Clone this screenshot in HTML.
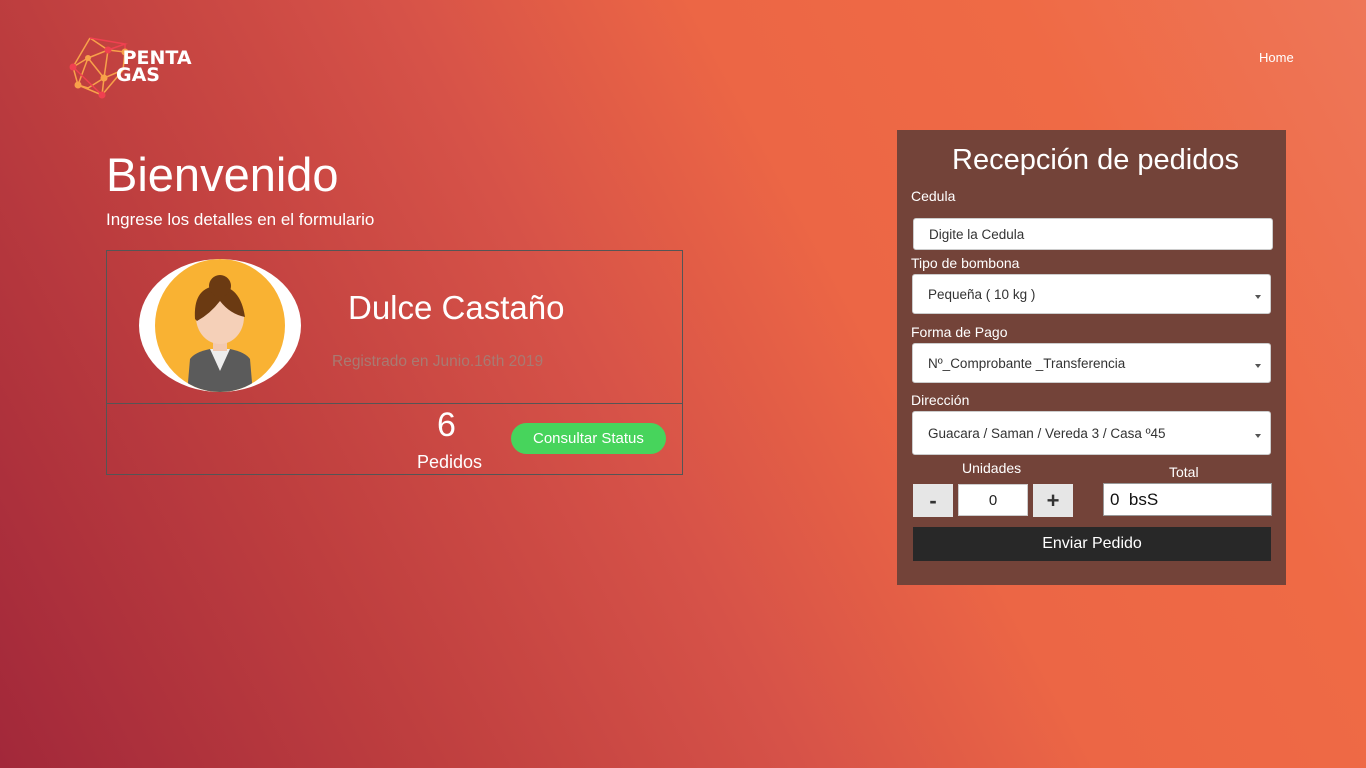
<!DOCTYPE html>
<html><head><meta charset="utf-8"><style>
*{box-sizing:border-box;margin:0;padding:0}
body{width:1366px;height:768px;overflow:hidden;font-family:"Liberation Sans",sans-serif;color:#fff;
background:linear-gradient(62deg,#a2283a 0%,#bf3f3f 25%,#d65248 45%,#ec6645 62%,#ef6a45 80%,#ee7658 100%);position:relative}
.abs{position:absolute}
.lbl{position:absolute;left:911px;font-size:14px;color:#fff}
.fld{position:absolute;left:912px;width:359px;background:#fff;border-radius:3px;color:#333;font-size:13.5px;padding-left:15px;display:flex;align-items:center;border:1px solid #ccc}
.fld .ar{position:absolute;right:9px;top:50%;margin-top:1px;border-left:3.5px solid transparent;border-right:3.5px solid transparent;border-top:4px solid #555}
</style></head><body>
<svg class="abs" style="left:68px;top:30px" width="70" height="70" viewBox="0 0 70 70">
<g stroke="#f8a14a" stroke-width="1.5" fill="none">
<path d="M10 55 L20 28 L40 20 L57 22 L55 40 L36 48 L20 58 L10 55 M20 28 L36 48 L40 20 M5 37 L20 28 M5 37 L10 55 M36 48 L34 65 L10 55 M22 8 L40 20 M22 8 L5 37 M55 40 L34 65"/>
</g>
<g stroke="#f04050" stroke-width="1.5" fill="none"><path d="M22 8 L57 14 L40 20 M5 37 L34 65 M57 14 L57 22"/></g>
<g fill="#f8a14a"><circle cx="10" cy="55" r="3.5"/><circle cx="36" cy="48" r="3.5"/><circle cx="57" cy="22" r="3.5"/><circle cx="20" cy="28" r="3"/></g>
<g fill="#f04050"><circle cx="40" cy="20" r="3.5"/><circle cx="5" cy="37" r="3.5"/><circle cx="34" cy="65" r="3.5"/></g>
</svg>
<div class="abs" style="left:116px;top:50px;font:900 19px/17px 'DejaVu Sans',sans-serif">&nbsp;PENTA<br>GAS</div>
<div class="abs" style="left:1259px;top:50px;font-size:13px">Home</div>

<div class="abs" style="left:106px;top:147px;font-size:47px">Bienvenido</div>
<div class="abs" style="left:106px;top:210px;font-size:17px">Ingrese los detalles en el formulario</div>

<div class="abs" style="left:106px;top:250px;width:577px;height:225px;border:1px solid #555"></div>
<div class="abs" style="left:106px;top:403px;width:577px;border-top:1px solid #555"></div>
<div class="abs" style="left:139px;top:259px;width:162px;height:133px;border-radius:50%;background:#fff;overflow:hidden">
<div class="abs" style="left:16px;top:0;width:130px;height:133px;border-radius:50%;background:#f9b233;overflow:hidden">
<svg width="130" height="133" viewBox="0 0 130 133">
<path d="M32 135 L35 100 Q40 93 55 90 L75 90 Q90 93 95 100 L98 135Z" fill="#5b5b5b"/>
<path d="M55 90 L65 112 L75 90Z" fill="#eee"/>
<rect x="58" y="76" width="14" height="16" fill="#f2c9b1"/>
<ellipse cx="65" cy="58" rx="24" ry="27" fill="#f5d0b8"/>
<path d="M40 60 Q38 30 60 27 Q85 25 90 58 Q75 55 65 42 Q55 55 42 62Z" fill="#6b3a12"/>
<circle cx="65" cy="27" r="11" fill="#6b3a12"/>
</svg></div></div>
<div class="abs" style="left:348px;top:289px;font-size:33px">Dulce Castaño</div>
<div class="abs" style="left:332px;top:353px;font-size:15.5px;color:#a87a72">Registrado en Junio.16th 2019</div>
<div class="abs" style="left:437px;top:406px;font-size:34px">6</div>
<div class="abs" style="left:417px;top:452px;font-size:18px">Pedidos</div>
<div class="abs" style="left:511px;top:423px;width:155px;height:31px;border-radius:16px;background:#47d45c;font-size:15px;line-height:31px;padding-left:22px">Consultar Status</div>

<div class="abs" style="left:897px;top:130px;width:389px;height:455px;background:#734339"></div>
<div class="abs" style="left:897px;top:144px;width:397px;text-align:center;font-size:29px">Recepción de pedidos</div>
<div class="lbl" style="top:188px">Cedula</div>
<div class="fld" style="top:218px;height:32px;left:913px;width:360px">Digite la Cedula</div>
<div class="lbl" style="top:255px">Tipo de bombona</div>
<div class="fld" style="top:274px;height:40px">Pequeña ( 10 kg )<span class="ar"></span></div>
<div class="lbl" style="top:324px">Forma de Pago</div>
<div class="fld" style="top:343px;height:40px">Nº_Comprobante _Transferencia<span class="ar"></span></div>
<div class="lbl" style="top:392px">Dirección</div>
<div class="fld" style="top:411px;height:44px">Guacara / Saman / Vereda 3 / Casa º45<span class="ar"></span></div>
<div class="abs" style="left:962px;top:460px;font-size:14px">Unidades</div>
<div class="abs" style="left:1169px;top:464px;font-size:14px">Total</div>
<div class="abs" style="left:913px;top:484px;width:40px;height:33px;background:#e6e6e6;color:#333;font-size:22px;font-weight:bold;text-align:center;line-height:33px">-</div>
<div class="abs" style="left:958px;top:484px;width:70px;height:32px;background:#fff;border:1px solid #ccc;color:#222;font-size:15px;text-align:center;line-height:32px">0</div>
<div class="abs" style="left:1033px;top:484px;width:40px;height:33px;background:#e6e6e6;color:#333;font-size:22px;font-weight:bold;text-align:center;line-height:33px">+</div>
<div class="abs" style="left:1103px;top:483px;width:169px;height:33px;background:#fff;border:1px solid #999;color:#111;font-size:17px;line-height:31px;padding-left:6px">0&nbsp; bsS</div>
<div class="abs" style="left:913px;top:527px;width:358px;height:34px;background:#282828;font-size:16px;text-align:center;line-height:34px">Enviar Pedido</div>
</body></html>
